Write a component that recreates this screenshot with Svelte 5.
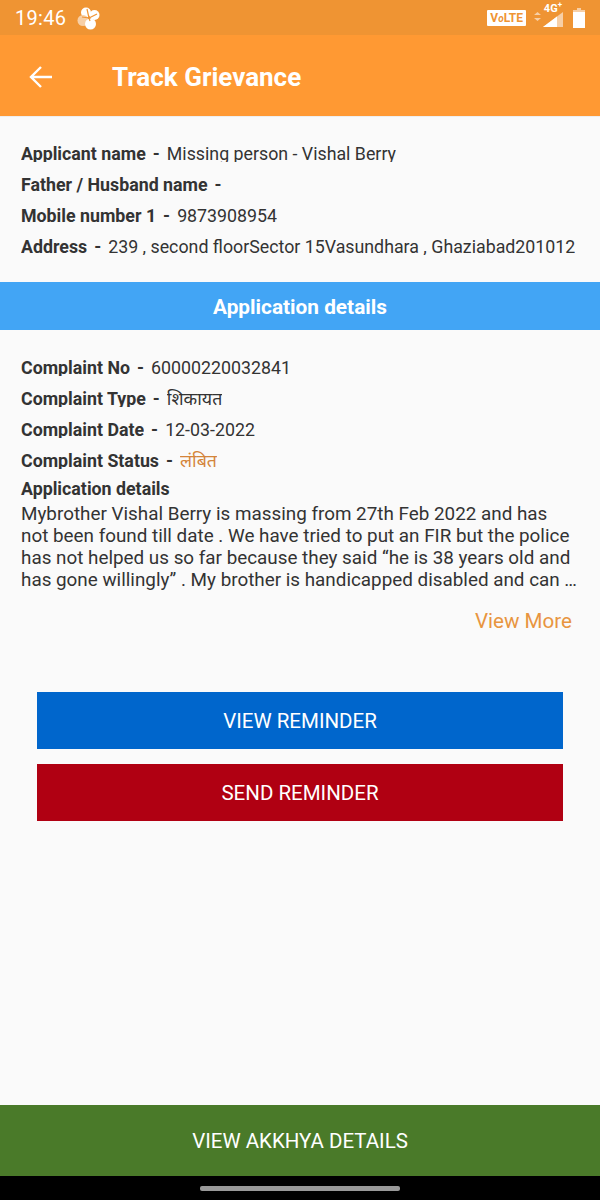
<script>
	const applicant = [
		{ label: "Applicant name", value: "Missing person - Vishal Berry" },
		{ label: "Father / Husband name", value: "" },
		{ label: "Mobile number 1", value: "9873908954" },
		{ label: "Address", value: "239 , second floorSector 15Vasundhara , Ghaziabad201012" },
	];

	const complaint = [
		{ label: "Complaint No", value: "60000220032841" },
		{ label: "Complaint Type", value: "शिकायत" },
		{ label: "Complaint Date", value: "12-03-2022" },
		{ label: "Complaint Status", value: "लंबित", status: true },
	];
</script>

<div class="screen">
	<div class="statusbar">
		<span class="time">19:46</span>
		<svg class="flower" viewBox="0 0 24 24" width="24" height="24">
			<circle cx="9" cy="6.500" r="5" fill="#fff" />
			<circle cx="17.500" cy="9" r="5" fill="#fff" />
			<circle cx="6" cy="14.500" r="5.500" fill="#f7cfa6" />
			<circle cx="13.500" cy="18" r="5.500" fill="#fff" />
			<path d="M12 12L10 3M12 12l8-4M12 12l-7-1M12 12l1 3" stroke="#ef9433" stroke-width="1.2" />
		</svg>
		<span class="spacer"></span>
		<span class="volte">V<i>o</i>LTE</span>
		<svg class="signal" viewBox="0 0 32 22" width="32" height="22">
			<path d="M1 8l3.500-3L8 8zM1 11l3.500 3L8 11z" fill="#f7cfa6" />
			<path d="M10 20L30 5v15z" fill="#f7cfa6" />
			<path d="M10 20L24 9.500V20z" fill="#fff" />
		</svg>
		<span class="fourg">4G<sup>+</sup></span>
		<svg class="battery" viewBox="0 0 12 20" width="12" height="20">
			<path d="M4 0h4v2H4zM0 2h12v2H0z" fill="#f7cfa6" />
			<path d="M0 4h12v16H0z" fill="#fff" />
		</svg>
	</div>

	<header class="toolbar">
		<svg class="back" viewBox="0 0 24 24" width="24" height="24">
			<path d="M23 12H2M12 2L2 12l10 10" fill="none" stroke="#fff" stroke-width="2.400" />
		</svg>
		<h1>Track Grievance</h1>
	</header>

	<main class="content">
		<section class="rows first">
			{#each applicant as row}
				<div class="row">
					<b>{row.label}</b><b class="dash">-</b><span>{row.value}</span>
				</div>
			{/each}
		</section>

		<div class="band">Application details</div>

		<section class="rows second">
			{#each complaint as row}
				<div class="row">
					<b>{row.label}</b><b class="dash">-</b><span class:status={row.status}>{row.value}</span>
				</div>
			{/each}
		</section>

		<section class="details">
			<b>Application details</b>
			<p>Mybrother Vishal Berry is massing from 27th Feb 2022 and has not been found till date . We have tried to put an FIR but the police has not helped us so far because they said “he is 38 years old and has gone willingly” . My brother is handicapped disabled and can …</p>
			<div class="more">View More</div>
		</section>

		<div class="actions">
			<button class="blue">VIEW REMINDER</button>
			<button class="red">SEND REMINDER</button>
		</div>
	</main>

	<button class="akkhya">VIEW AKKHYA DETAILS</button>
	<div class="navbar"><span class="pill"></span></div>
</div>

<style>
	:global(body) {
		margin: 0;
	}
	.screen {
		width: 600px;
		height: 1200px;
		display: flex;
		flex-direction: column;
		background: #fafafa;
		font-family: Roboto, "Noto Sans", "Noto Sans Devanagari", sans-serif;
		color: #333;
		overflow: hidden;
	}
	.statusbar {
		height: 35px;
		flex: none;
		display: flex;
		align-items: center;
		padding: 0 15px;
		background: #ef9433;
		color: #fff;
		box-sizing: border-box;
		position: relative;
	}
	.time {
		font-size: 20px;
		letter-spacing: 0.3px;
	}
	.flower {
		margin-left: 11px;
	}
	.spacer {
		flex: 1;
	}
	.volte {
		background: #fff;
		color: #ef9433;
		font-size: 12px;
		font-weight: 700;
		line-height: 16px;
		height: 16px;
		padding: 0 3px;
		border-radius: 1px;
		margin-right: 7px;
	}
	.volte i {
		font-size: 10px;
	}
	.signal {
		margin-right: 8px;
	}
	.fourg {
		position: absolute;
		right: 38px;
		top: 3px;
		font-size: 11px;
		font-weight: 700;
		line-height: 12px;
	}
	.fourg sup {
		font-size: 8px;
		line-height: 0;
	}
	.toolbar {
		height: 82px;
		flex: none;
		display: flex;
		align-items: center;
		background: #ff9933;
		box-sizing: border-box;
		padding-left: 29px;
		padding-top: 2px;
		border-bottom: 1px solid #eee;
	}
	.back {
		margin-right: 59px;
	}
	h1 {
		margin: 0;
		font-size: 26px;
		font-weight: 700;
		color: #fff;
	}
	.content {
		flex: 1;
		min-height: 0;
	}
	.rows {
		display: flex;
		flex-direction: column;
		padding: 0 21px;
	}
	.first {
		padding-top: 26px;
		height: 165px;
		box-sizing: border-box;
	}
	.second {
		padding-top: 27px;
	}
	.row {
		height: 31px;
		line-height: 22px;
		font-size: 17.800px;
		white-space: nowrap;
		display: flex;
		overflow: hidden;
	}
	/* descenders get cut off on these rows */
	.row > * {
		height: 19px;
		overflow: hidden;
		display: block;
	}
	.row b {
		font-weight: 700;
	}
	.row .dash {
		margin: 0 7px;
	}
	.status {
		color: #d4853a;
	}
	.details {
		padding: 0 21px;
		margin-top: -3px;
		font-size: 17.800px;
		line-height: 22px;
	}
	.details b {
		display: block;
		height: 22px;
		font-weight: 700;
	}
	.details p {
		margin: 3px 0 0;
		font-size: 18.850px;
		line-height: 22px;
	}
	.more {
		margin: 17px 7px 0 0;
		text-align: right;
		font-size: 20.600px;
		line-height: 26px;
		color: #e8953f;
	}
	.band {
		height: 48px;
		line-height: 50px;
		text-align: center;
		background: #42a5f5;
		color: #fff;
		font-size: 20.800px;
		font-weight: 700;
	}
	.actions {
		display: flex;
		flex-direction: column;
		gap: 15px;
		padding: 58px 37px 0;
	}
	button {
		border: none;
		font-family: inherit;
		color: #fff;
		font-size: 20.500px;
		padding: 0;
	}
	.actions button {
		height: 57px;
	}
	.blue {
		background: #0066cc;
	}
	.red {
		background: #b00012;
	}
	.akkhya {
		height: 71px;
		flex: none;
		background: #4a7a29;
	}
	.navbar {
		height: 24px;
		flex: none;
		background: #000;
		display: flex;
		justify-content: center;
		padding-top: 10px;
		box-sizing: border-box;
	}
	.pill {
		width: 200px;
		height: 5px;
		border-radius: 2px;
		background: #999;
	}
</style>
